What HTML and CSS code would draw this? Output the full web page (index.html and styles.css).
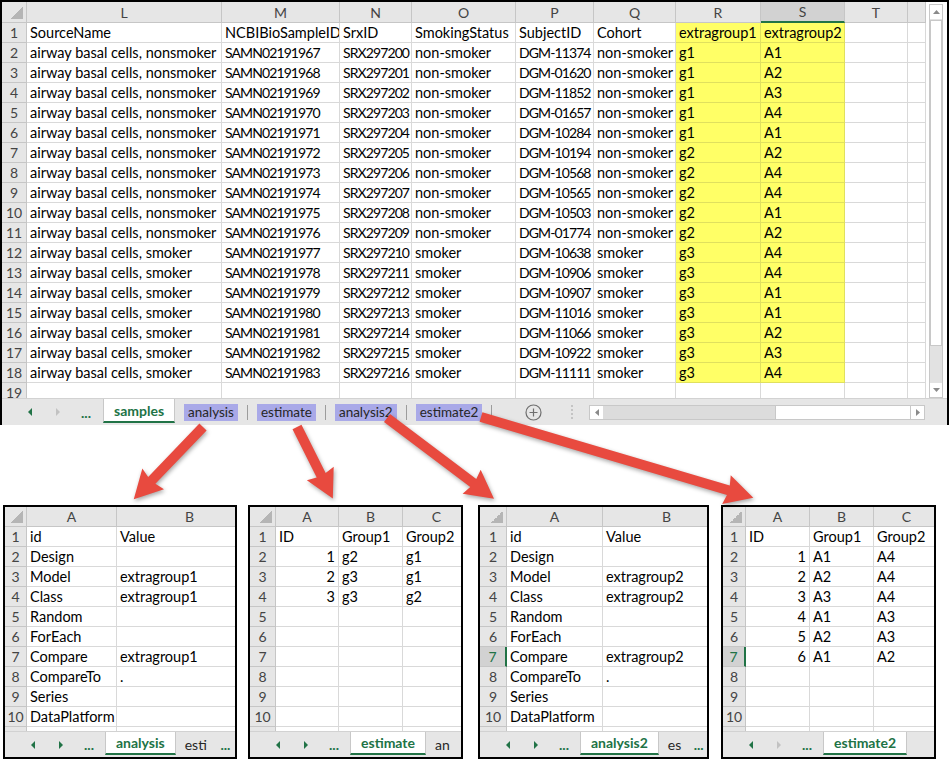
FILE: index.html
```html
<!DOCTYPE html>
<html>
    <head>
        <meta charset="UTF-8">
        <title>samples, analysis and estimate sheets</title>
        <link rel="stylesheet" href="styles.css">
    </head>
    <body>
        <div class="book">
            <div class="book-body">
                <div class="sheet">
                    <table class="grid">
                        <colgroup>
                            <col class="c-rh"><col class="c-l"><col class="c-m"><col class="c-n"><col class="c-o"><col class="c-p"><col class="c-q"><col class="c-r"><col class="c-s"><col class="c-t"><col class="c-u">
                        </colgroup>
                        <thead>
                            <tr><th class="corner"></th><th>L</th><th>M</th><th>N</th><th>O</th><th>P</th><th>Q</th><th>R</th><th class="sel-col">S</th><th>T</th><th></th></tr>
                        </thead>
                        <tbody>
                            <tr><th>1</th><td>SourceName</td><td>NCBIBioSampleID</td><td>SrxID</td><td>SmokingStatus</td><td>SubjectID</td><td>Cohort</td><td class="hl">extragroup1</td><td class="hl">extragroup2</td><td></td><td></td></tr>
                            <tr><th>2</th><td>airway basal cells, nonsmoker</td><td>SAMN02191967</td><td>SRX297200</td><td>non-smoker</td><td>DGM-11374</td><td>non-smoker</td><td class="hl">g1</td><td class="hl">A1</td><td></td><td></td></tr>
                            <tr><th>3</th><td>airway basal cells, nonsmoker</td><td>SAMN02191968</td><td>SRX297201</td><td>non-smoker</td><td>DGM-01620</td><td>non-smoker</td><td class="hl">g1</td><td class="hl">A2</td><td></td><td></td></tr>
                            <tr><th>4</th><td>airway basal cells, nonsmoker</td><td>SAMN02191969</td><td>SRX297202</td><td>non-smoker</td><td>DGM-11852</td><td>non-smoker</td><td class="hl">g1</td><td class="hl">A3</td><td></td><td></td></tr>
                            <tr><th>5</th><td>airway basal cells, nonsmoker</td><td>SAMN02191970</td><td>SRX297203</td><td>non-smoker</td><td>DGM-01657</td><td>non-smoker</td><td class="hl">g1</td><td class="hl">A4</td><td></td><td></td></tr>
                            <tr><th>6</th><td>airway basal cells, nonsmoker</td><td>SAMN02191971</td><td>SRX297204</td><td>non-smoker</td><td>DGM-10284</td><td>non-smoker</td><td class="hl">g1</td><td class="hl">A1</td><td></td><td></td></tr>
                            <tr><th>7</th><td>airway basal cells, nonsmoker</td><td>SAMN02191972</td><td>SRX297205</td><td>non-smoker</td><td>DGM-10194</td><td>non-smoker</td><td class="hl">g2</td><td class="hl">A2</td><td></td><td></td></tr>
                            <tr><th>8</th><td>airway basal cells, nonsmoker</td><td>SAMN02191973</td><td>SRX297206</td><td>non-smoker</td><td>DGM-10568</td><td>non-smoker</td><td class="hl">g2</td><td class="hl">A4</td><td></td><td></td></tr>
                            <tr><th>9</th><td>airway basal cells, nonsmoker</td><td>SAMN02191974</td><td>SRX297207</td><td>non-smoker</td><td>DGM-10565</td><td>non-smoker</td><td class="hl">g2</td><td class="hl">A4</td><td></td><td></td></tr>
                            <tr><th>10</th><td>airway basal cells, nonsmoker</td><td>SAMN02191975</td><td>SRX297208</td><td>non-smoker</td><td>DGM-10503</td><td>non-smoker</td><td class="hl">g2</td><td class="hl">A1</td><td></td><td></td></tr>
                            <tr><th>11</th><td>airway basal cells, nonsmoker</td><td>SAMN02191976</td><td>SRX297209</td><td>non-smoker</td><td>DGM-01774</td><td>non-smoker</td><td class="hl">g2</td><td class="hl">A2</td><td></td><td></td></tr>
                            <tr><th>12</th><td>airway basal cells, smoker</td><td>SAMN02191977</td><td>SRX297210</td><td>smoker</td><td>DGM-10638</td><td>smoker</td><td class="hl">g3</td><td class="hl">A4</td><td></td><td></td></tr>
                            <tr><th>13</th><td>airway basal cells, smoker</td><td>SAMN02191978</td><td>SRX297211</td><td>smoker</td><td>DGM-10906</td><td>smoker</td><td class="hl">g3</td><td class="hl">A4</td><td></td><td></td></tr>
                            <tr><th>14</th><td>airway basal cells, smoker</td><td>SAMN02191979</td><td>SRX297212</td><td>smoker</td><td>DGM-10907</td><td>smoker</td><td class="hl">g3</td><td class="hl">A1</td><td></td><td></td></tr>
                            <tr><th>15</th><td>airway basal cells, smoker</td><td>SAMN02191980</td><td>SRX297213</td><td>smoker</td><td>DGM-11016</td><td>smoker</td><td class="hl">g3</td><td class="hl">A1</td><td></td><td></td></tr>
                            <tr><th>16</th><td>airway basal cells, smoker</td><td>SAMN02191981</td><td>SRX297214</td><td>smoker</td><td>DGM-11066</td><td>smoker</td><td class="hl">g3</td><td class="hl">A2</td><td></td><td></td></tr>
                            <tr><th>17</th><td>airway basal cells, smoker</td><td>SAMN02191982</td><td>SRX297215</td><td>smoker</td><td>DGM-10922</td><td>smoker</td><td class="hl">g3</td><td class="hl">A3</td><td></td><td></td></tr>
                            <tr><th>18</th><td>airway basal cells, smoker</td><td>SAMN02191983</td><td>SRX297216</td><td>smoker</td><td>DGM-11111</td><td>smoker</td><td class="hl">g3</td><td class="hl">A4</td><td></td><td></td></tr>
                            <tr><th>19</th><td></td><td></td><td></td><td></td><td></td><td></td><td></td><td></td><td></td><td></td></tr>
                        </tbody>
                    </table>
                </div>

                <div class="vscroll">
                    <span class="vs-arrow"><svg width="7" height="4" viewBox="0 0 7 4"><path d="M0 4L3.5 0L7 4Z"/></svg></span>
                    <span class="vs-thumb"></span>
                    <span class="vs-track"></span>
                    <span class="vs-arrow"><svg width="7" height="4" viewBox="0 0 7 4"><path d="M0 0H7L3.5 4Z"/></svg></span>
                </div>
            </div>

            <div class="tabs">
                <div class="tab-nav">
                    <span class="nav on"><svg width="4" height="8" viewBox="0 0 4 8"><path d="M4 0V8L0 4Z"/></svg></span>
                    <span class="nav off"><svg width="4" height="8" viewBox="0 0 4 8"><path d="M0 0V8L4 4Z"/></svg></span>
                    <span class="nav more">...</span>
                </div>
                <span class="tab active">samples</span>
                <span class="tab"><span class="mark">analysis</span></span>
                <span class="sep"></span>
                <span class="tab"><span class="mark">estimate</span></span>
                <span class="sep"></span>
                <span class="tab"><span class="mark">analysis2</span></span>
                <span class="sep"></span>
                <span class="tab"><span class="mark">estimate2</span></span>
                <span class="sep"></span>
                <span class="add">
                    <svg width="17" height="17" viewBox="0 0 17 17"><circle cx="8.5" cy="8.5" r="7.5"/><path d="M8.5 4.5V12.5M4.5 8.5H12.5"/></svg>
                </span>
                <span class="split">
                    <svg width="2" height="14" viewBox="0 0 2 14"><path d="M0 0H2V2H0ZM0 4H2V6H0ZM0 8H2V10H0ZM0 12H2V14H0Z"/></svg>
                </span>
                <div class="hscroll">
                    <span class="hs-arrow"><svg width="4" height="7" viewBox="0 0 4 7"><path d="M4 0V7L0 3.5Z"/></svg></span>
                    <span class="hs-track"></span>
                    <span class="hs-thumb"></span>
                    <span class="hs-arrow"><svg width="4" height="7" viewBox="0 0 4 7"><path d="M0 0V7L4 3.5Z"/></svg></span>
                </div>
            </div>
        </div>

        <div class="panels">
            <div class="mini mini-analysis">
                <div class="sheet">
                    <table class="grid">
                        <colgroup><col class="c-rh"><col class="c-a"><col class="c-b"></colgroup>
                        <thead>
                            <tr><th class="corner"></th><th>A</th><th>B</th></tr>
                        </thead>
                        <tbody>
                            <tr><th>1</th><td>id</td><td>Value</td></tr>
                            <tr><th>2</th><td>Design</td><td></td></tr>
                            <tr><th>3</th><td>Model</td><td>extragroup1</td></tr>
                            <tr><th>4</th><td>Class</td><td>extragroup1</td></tr>
                            <tr><th>5</th><td>Random</td><td></td></tr>
                            <tr><th>6</th><td>ForEach</td><td></td></tr>
                            <tr><th>7</th><td>Compare</td><td>extragroup1</td></tr>
                            <tr><th>8</th><td>CompareTo</td><td>.</td></tr>
                            <tr><th>9</th><td>Series</td><td></td></tr>
                            <tr><th>10</th><td>DataPlatform</td><td></td></tr>
                            <tr><th>11</th><td></td><td></td></tr>
                        </tbody>
                    </table>
                </div>
                <div class="tabs">
                    <div class="tab-nav">
                        <span class="nav on"><svg width="4" height="8" viewBox="0 0 4 8"><path d="M4 0V8L0 4Z"/></svg></span>
                        <span class="nav on"><svg width="4" height="8" viewBox="0 0 4 8"><path d="M0 0V8L4 4Z"/></svg></span>
                        <span class="nav more">...</span>
                    </div>
                    <span class="tab active">analysis</span>
                    <span class="tab">esti</span>
                    <span class="nav more">...</span>
                </div>
            </div>

            <div class="mini mini-estimate">
                <div class="sheet">
                    <table class="grid">
                        <colgroup><col class="c-rh"><col class="c-a"><col class="c-b"><col class="c-c"></colgroup>
                        <thead>
                            <tr><th class="corner"></th><th>A</th><th>B</th><th>C</th></tr>
                        </thead>
                        <tbody>
                            <tr><th>1</th><td>ID</td><td>Group1</td><td>Group2</td></tr>
                            <tr><th>2</th><td class="num">1</td><td>g2</td><td>g1</td></tr>
                            <tr><th>3</th><td class="num">2</td><td>g3</td><td>g1</td></tr>
                            <tr><th>4</th><td class="num">3</td><td>g3</td><td>g2</td></tr>
                            <tr><th>5</th><td></td><td></td><td></td></tr>
                            <tr><th>6</th><td></td><td></td><td></td></tr>
                            <tr><th>7</th><td></td><td></td><td></td></tr>
                            <tr><th>8</th><td></td><td></td><td></td></tr>
                            <tr><th>9</th><td></td><td></td><td></td></tr>
                            <tr><th>10</th><td></td><td></td><td></td></tr>
                            <tr><th>11</th><td></td><td></td><td></td></tr>
                        </tbody>
                    </table>
                </div>
                <div class="tabs">
                    <div class="tab-nav">
                        <span class="nav on"><svg width="4" height="8" viewBox="0 0 4 8"><path d="M4 0V8L0 4Z"/></svg></span>
                        <span class="nav on"><svg width="4" height="8" viewBox="0 0 4 8"><path d="M0 0V8L4 4Z"/></svg></span>
                        <span class="nav more">...</span>
                    </div>
                    <span class="tab active">estimate</span>
                    <span class="tab">an</span>
                </div>
            </div>

            <div class="mini mini-analysis2">
                <div class="sheet">
                    <table class="grid">
                        <colgroup><col class="c-rh"><col class="c-a"><col class="c-b"></colgroup>
                        <thead>
                            <tr><th class="corner"></th><th>A</th><th>B</th></tr>
                        </thead>
                        <tbody>
                            <tr><th>1</th><td>id</td><td>Value</td></tr>
                            <tr><th>2</th><td>Design</td><td></td></tr>
                            <tr><th>3</th><td>Model</td><td>extragroup2</td></tr>
                            <tr><th>4</th><td>Class</td><td>extragroup2</td></tr>
                            <tr><th>5</th><td>Random</td><td></td></tr>
                            <tr><th>6</th><td>ForEach</td><td></td></tr>
                            <tr><th class="sel-row">7</th><td>Compare</td><td>extragroup2</td></tr>
                            <tr><th>8</th><td>CompareTo</td><td>.</td></tr>
                            <tr><th>9</th><td>Series</td><td></td></tr>
                            <tr><th>10</th><td>DataPlatform</td><td></td></tr>
                            <tr><th>11</th><td></td><td></td></tr>
                        </tbody>
                    </table>
                </div>
                <div class="tabs">
                    <div class="tab-nav">
                        <span class="nav on"><svg width="4" height="8" viewBox="0 0 4 8"><path d="M4 0V8L0 4Z"/></svg></span>
                        <span class="nav on"><svg width="4" height="8" viewBox="0 0 4 8"><path d="M0 0V8L4 4Z"/></svg></span>
                        <span class="nav more">...</span>
                    </div>
                    <span class="tab active">analysis2</span>
                    <span class="tab">es</span>
                    <span class="nav more">...</span>
                </div>
            </div>

            <div class="mini mini-estimate2">
                <div class="sheet">
                    <table class="grid">
                        <colgroup><col class="c-rh"><col class="c-a"><col class="c-b"><col class="c-c"></colgroup>
                        <thead>
                            <tr><th class="corner"></th><th>A</th><th>B</th><th>C</th></tr>
                        </thead>
                        <tbody>
                            <tr><th>1</th><td>ID</td><td>Group1</td><td>Group2</td></tr>
                            <tr><th>2</th><td class="num">1</td><td>A1</td><td>A4</td></tr>
                            <tr><th>3</th><td class="num">2</td><td>A2</td><td>A4</td></tr>
                            <tr><th>4</th><td class="num">3</td><td>A3</td><td>A4</td></tr>
                            <tr><th>5</th><td class="num">4</td><td>A1</td><td>A3</td></tr>
                            <tr><th>6</th><td class="num">5</td><td>A2</td><td>A3</td></tr>
                            <tr><th class="sel-row">7</th><td class="num">6</td><td>A1</td><td>A2</td></tr>
                            <tr><th>8</th><td></td><td></td><td></td></tr>
                            <tr><th>9</th><td></td><td></td><td></td></tr>
                            <tr><th>10</th><td></td><td></td><td></td></tr>
                            <tr><th>11</th><td></td><td></td><td></td></tr>
                        </tbody>
                    </table>
                </div>
                <div class="tabs">
                    <div class="tab-nav">
                        <span class="nav on"><svg width="4" height="8" viewBox="0 0 4 8"><path d="M4 0V8L0 4Z"/></svg></span>
                        <span class="nav off"><svg width="4" height="8" viewBox="0 0 4 8"><path d="M0 0V8L4 4Z"/></svg></span>
                        <span class="nav more">...</span>
                    </div>
                    <span class="tab active">estimate2</span>
                </div>
            </div>
        </div>

        <!-- arrows from the sheet tabs down to the sheets -->
        <svg class="arrows" width="949" height="764" viewBox="0 0 949 764">
            <path transform="translate(203 427) rotate(133.8)" d="M0 -5H74L72 -15L100 0L72 15L74 5H0Z"/>
            <path transform="translate(297 427) rotate(63.4)" d="M0 -5H54L52 -15L80 0L52 15L54 5H0Z"/>
            <path transform="translate(387 418) rotate(37)" d="M0 -5H108L106 -15L134 0L106 15L108 5H0Z"/>
            <path transform="translate(481 417) rotate(16.5)" d="M0 -5H258L256 -15L284 0L256 15L258 5H0Z"/>
        </svg>
    </body>
</html>
```

FILE: styles.css
```css
*
{
    box-sizing: border-box;
}

body
{
    position: relative;
    width: 949px;
    height: 764px;
    margin: 0;
    overflow: hidden;
    background: #fff;
    color: #000;
    font-family: Lato, "Liberation Sans", sans-serif;
}

/* main workbook */

.book
{
    height: 425px;
    border: 2px solid #000;
    border-bottom: 0;
}

.book-body
{
    display: flex;
    height: 396px;
}

.book .sheet
{
    width: 924px;
}

.sheet
{
    overflow: hidden;
}

/* cells */

.grid
{
    border-collapse: separate;
    border-spacing: 0;
    table-layout: fixed;
}

.grid th,
.grid td
{
    height: 20px;
    padding: 0 3px;
    border-right: 1px solid #d9d9d9;
    border-bottom: 1px solid #d9d9d9;
    overflow: hidden;
    white-space: nowrap;
    font-size: 14.5px;
    line-height: 19px;
    text-align: left;
    vertical-align: bottom;
}

.grid th
{
    padding: 0;
    background: #e6e6e6;
    border-color: #c6c6c6;
    color: #444;
    font-weight: normal;
    text-align: center;
    font-size: 14px;
}

.grid thead th
{
    height: 19px;
    vertical-align: middle;
}

.grid th.corner
{
    background: linear-gradient(135deg, transparent 50%, #b5b5b5 50%) no-repeat right 3px bottom 3px / 12px 12px, #e6e6e6;
}

.grid th.sel-col
{
    background: #d2d2d2;
    border-bottom: 2px solid #217346;
}

.grid th.sel-row
{
    background: #d2d2d2;
    border-right: 2px solid #217346;
    color: #217346;
}

.grid td.hl
{
    background: #ffff66;
    border-color: #e0e05e;
}

.grid td.num
{
    text-align: right;
}

/* sample, run and subject ids are set tighter, like the narrow Calibri figures */
.book tbody tr + tr td:nth-child(3),
.book tbody tr + tr td:nth-child(4),
.book tbody tr + tr td:nth-child(6)
{
    font-size: 14px;
    letter-spacing: -0.9px;
}

.book .c-rh { width: 25px; }
.book .c-l { width: 195px; }
.book .c-m { width: 118px; }
.book .c-n { width: 72px; }
.book .c-o { width: 104px; }
.book .c-p { width: 78px; }
.book .c-q { width: 82px; }
.book .c-r { width: 85px; }
.book .c-s { width: 84px; }
.book .c-t { width: 63px; }
.book .c-u { width: 18px; }
.book .grid { width: 924px; }

/* vertical scrollbar */

.vscroll
{
    display: flex;
    flex-direction: column;
    width: 14px;
    height: 394px;
    margin: 2px 0 0 3px;
    border: 1px solid #c8c8c8;
    background: #e2e2e2;
}

.vs-arrow
{
    display: flex;
    align-items: center;
    justify-content: center;
    height: 14px;
    background: #fff;
    fill: #8a8a8a;
}

.vs-thumb
{
    height: 326px;
    margin: 1px 0 0;
    border: 1px solid #c8c8c8;
    background: #fff;
}

.vs-track
{
    flex: 1;
}

/* sheet tabs */

.tabs
{
    display: flex;
    height: 27px;
    background: #e6e6e6;
    border-top: 1px solid #d2d2d2;
    color: #262626;
    font-size: 13.5px;
    white-space: nowrap;
}

.tab-nav
{
    display: flex;
    flex: none;
    width: 101px;
    padding-left: 14px;
    font-size: 14px;
}

.nav
{
    display: flex;
    align-items: center;
    justify-content: center;
    width: 28px;
}

.nav.on
{
    fill: #217346;
}

.nav.off
{
    fill: #c2c2c2;
}

.nav.more
{
    color: #217346;
    font-weight: bold;
}

.tab
{
    display: flex;
    align-items: center;
    padding: 0 9px;
}

.tab.active
{
    margin-bottom: 2px;
    padding: 0 10px;
    background: #fff;
    border-left: 1px solid #c8c8c8;
    border-right: 1px solid #c8c8c8;
    border-bottom: 2px solid #217346;
    color: #217346;
    font-size: 14px;
    font-weight: bold;
}

.mark
{
    padding: 0 4px;
    background: #a9a9e8;
    line-height: 17px;
}

.sep
{
    align-self: center;
    width: 1px;
    height: 15px;
    background: #9c9c9c;
}

.add
{
    display: flex;
    align-items: center;
    margin-left: 33px;
    fill: none;
    stroke: #6f6f6f;
    stroke-width: 1.2;
}

.split
{
    display: flex;
    align-items: center;
    margin-left: 29px;
    fill: #c4c4c4;
}

.hscroll
{
    display: flex;
    flex: 1;
    align-self: center;
    height: 15px;
    margin: 0 22px 0 16px;
    border: 1px solid #c8c8c8;
    background: #dcdcdc;
}

.hs-arrow
{
    display: flex;
    align-items: center;
    justify-content: center;
    width: 13px;
    background: #fff;
    fill: #8a8a8a;
}

.hs-track
{
    width: 172px;
}

.hs-thumb
{
    flex: 1;
    border-left: 1px solid #c8c8c8;
    border-right: 1px solid #c8c8c8;
    background: #fff;
}

/* the four small sheets */

.panels
{
    display: flex;
    align-items: flex-start;
    padding: 80px 0 0 3px;
}

.mini
{
    display: flex;
    flex-direction: column;
    height: 254px;
    border: 2px solid #000;
    overflow: hidden;
}

.mini .sheet
{
    height: 224px;
}

.mini .tabs
{
    height: 26px;
    font-size: 14px;
}

.mini .tab-nav
{
    width: 100px;
}

.mini-analysis { width: 234px; }
.mini-analysis .grid { width: 258px; }
.mini-analysis .c-rh { width: 22px; }
.mini-analysis .c-a { width: 90px; }
.mini-analysis .c-b { width: 146px; }

.mini-estimate { width: 215px; margin-left: 11px; }
.mini-estimate .grid { width: 221px; }
.mini-estimate .c-rh { width: 26px; }
.mini-estimate .c-a { width: 63px; }
.mini-estimate .c-b { width: 64px; }
.mini-estimate .c-c { width: 68px; }

.mini-analysis2 { width: 231px; margin-left: 15px; }
.mini-analysis2 .grid { width: 251px; }
.mini-analysis2 .c-rh { width: 27px; }
.mini-analysis2 .c-a { width: 96px; }
.mini-analysis2 .c-b { width: 128px; }

.mini-estimate2 { width: 215px; margin-left: 12px; }
.mini-estimate2 .grid { width: 217px; }
.mini-estimate2 .c-rh { width: 23px; }
.mini-estimate2 .c-a { width: 64px; }
.mini-estimate2 .c-b { width: 64px; }
.mini-estimate2 .c-c { width: 66px; }

/* overlay arrows */

.arrows
{
    position: absolute;
    top: 0;
    left: 0;
    fill: #e84a3f;
    pointer-events: none;
    filter: drop-shadow(1px 2px 2px rgba(0, 0, 0, 0.35));
}
```
